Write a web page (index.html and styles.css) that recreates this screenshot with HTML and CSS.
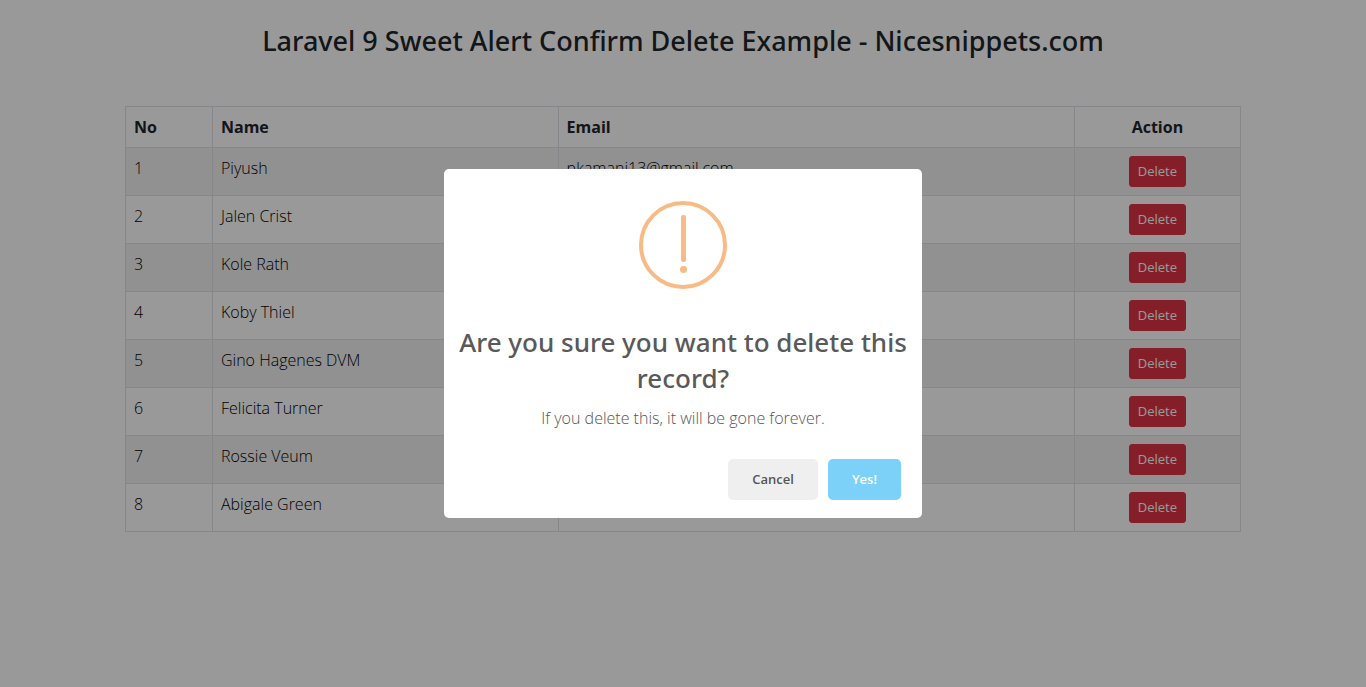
FILE: index.html
```html
<!DOCTYPE html>
<html lang="en">
<head>
<meta charset="utf-8">
<meta name="viewport" content="width=device-width, initial-scale=1">
<title>Laravel 9 Sweet Alert Confirm Delete Example - Nicesnippets.com</title>
<link rel="stylesheet" href="styles.css">
</head>
<body>
<main class="container">
  <h1 class="page-title">Laravel 9 Sweet Alert Confirm Delete Example - Nicesnippets.com</h1>
  <table class="table">
    <colgroup>
      <col class="col-no"><col class="col-name"><col class="col-email"><col class="col-action">
    </colgroup>
    <thead>
      <tr><th scope="col">No</th><th scope="col">Name</th><th scope="col">Email</th><th scope="col" class="action">Action</th></tr>
    </thead>
    <tbody>
      <tr><td>1</td><td>Piyush</td><td>pkamani13@gmail.com</td><td class="action"><button type="button" class="btn-delete">Delete</button></td></tr>
      <tr><td>2</td><td>Jalen Crist</td><td></td><td class="action"><button type="button" class="btn-delete">Delete</button></td></tr>
      <tr><td>3</td><td>Kole Rath</td><td></td><td class="action"><button type="button" class="btn-delete">Delete</button></td></tr>
      <tr><td>4</td><td>Koby Thiel</td><td></td><td class="action"><button type="button" class="btn-delete">Delete</button></td></tr>
      <tr><td>5</td><td>Gino Hagenes DVM</td><td></td><td class="action"><button type="button" class="btn-delete">Delete</button></td></tr>
      <tr><td>6</td><td>Felicita Turner</td><td></td><td class="action"><button type="button" class="btn-delete">Delete</button></td></tr>
      <tr><td>7</td><td>Rossie Veum</td><td></td><td class="action"><button type="button" class="btn-delete">Delete</button></td></tr>
      <tr><td>8</td><td>Abigale Green</td><td></td><td class="action"><button type="button" class="btn-delete">Delete</button></td></tr>
    </tbody>
  </table>
</main>
<div class="overlay">
  <div class="modal" role="dialog" aria-modal="true" aria-labelledby="modal-title" aria-describedby="modal-text">
    <svg class="modal-icon" viewBox="0 0 88 88" aria-hidden="true">
      <circle cx="44" cy="44" r="42" fill="none" stroke="#f8bb86" stroke-width="4"/>
      <rect x="42" y="14" width="5" height="47" rx="2" fill="#f8bb86"/>
      <circle cx="44.500" cy="68.500" r="3.500" fill="#f8bb86"/>
    </svg>
    <h2 class="modal-title" id="modal-title">Are you sure you want to delete this record?</h2>
    <p class="modal-text" id="modal-text">If you delete this, it will be gone forever.</p>
    <div class="modal-footer">
      <button type="button" class="btn btn-cancel">Cancel</button>
      <button type="button" class="btn btn-confirm">Yes!</button>
    </div>
  </div>
</div>
</body>
</html>
```
FILE: styles.css
```css
* { box-sizing: border-box; }
body {
  margin: 0;
  background: #fff;
  color: #212529;
  font-family: "Open Sans", "Noto Sans", sans-serif;
  font-size: 16px;
  font-weight: 400;
  line-height: 24px;
}
.container {
  max-width: 1140px;
  margin: 0 auto;
  padding: 24px 12px;
}
.page-title {
  margin: 0 0 48px;
  font-family: "Noto Sans", "Open Sans", sans-serif;
  font-size: 27px;
  font-weight: 500;
  line-height: 34px;
  text-align: center;
}
.table {
  width: 100%;
  table-layout: fixed;
  border-collapse: collapse;
}
.col-no { width: 7.8%; }
.col-name { width: 31%; }
.col-email { width: 46.3%; }
.col-action { width: 14.9%; }
.table th, .table td {
  padding: 8px;
  border: 1px solid #dee2e6;
  text-align: left;
  vertical-align: top;
}
.table th { font-weight: 700; }
.table td { font-weight: 300; color: #000; }
.table .action { text-align: center; }
.table tbody tr:nth-child(odd) { background: #f2f2f2; }
.btn-delete {
  display: block;
  margin: 0 auto;
  padding: 4px 8px;
  border: 1px solid #dc3545;
  border-radius: 3px;
  background: #dc3545;
  color: #fff;
  font: inherit;
  font-weight: 400;
  font-size: 13px;
  line-height: 21px;
}
.overlay {
  position: fixed;
  inset: 0;
  display: flex;
  align-items: center;
  justify-content: center;
  background: rgba(0, 0, 0, .4);
}
.modal {
  width: 478px;
  max-width: 90%;
  border-radius: 5px;
  background: #fff;
  text-align: center;
}
.modal-icon {
  display: block;
  width: 88px;
  height: 88px;
  margin: 32px auto 35px;
}
.modal-title {
  margin: 0;
  padding: 0 12px;
  color: #595959;
  font-family: "Noto Sans", "Open Sans", sans-serif;
  font-size: 26px;
  font-weight: 500;
  line-height: 36px;
}
.modal-text {
  margin: 10px 0 0;
  padding: 0 10px;
  color: #555;
  font-weight: 300;
  line-height: 24px;
}
.modal-footer {
  display: flex;
  justify-content: flex-end;
  gap: 10px;
  margin-top: 29px;
  padding: 0 21px 18px;
}
.btn {
  padding: 10px 24px;
  border: 0;
  border-radius: 5px;
  font: inherit;
  font-size: 13px;
  font-weight: 600;
  line-height: 21px;
}
.btn-cancel { background: #efefef; color: #555; }
.btn-confirm { background: #7cd1f9; color: #fff; }
```
